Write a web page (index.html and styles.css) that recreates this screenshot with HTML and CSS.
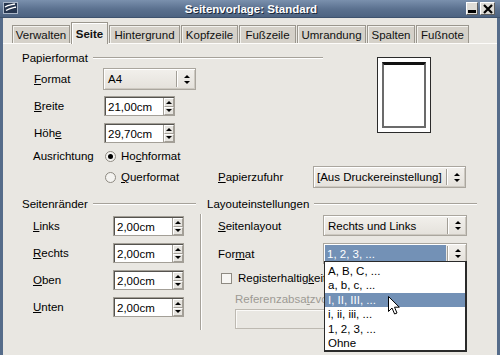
FILE: index.html
```html
<!DOCTYPE html>
<html lang="de">
<head>
<meta charset="utf-8">
<title>Seitenvorlage: Standard</title>
<link rel="stylesheet" href="styles.css">
</head>
<body>
<div class="titlebar">
  <svg class="appicon" width="15" height="12" viewBox="0 0 15 12">
    <rect x="0.5" y="0.5" width="14" height="11" fill="#26364f" stroke="#a9b6c8"/>
    <path d="M2 5 C5 3 8 3 12 2" stroke="#fff" stroke-width="1.4" fill="none"/>
    <path d="M3 8.5 C6 6.5 9 6 13 5" stroke="#fff" stroke-width="1.4" fill="none"/>
  </svg>
  <div class="title">Seitenvorlage: Standard</div>
  <div class="wbtns">
    <span class="wbtn wmin"><span class="minbar"></span></span>
    <span class="wbtn wclose">
      <svg width="10" height="10" viewBox="0 0 10 10"><path d="M1 1 L9 9 M9 1 L1 9" stroke="#000" stroke-width="2.2"/></svg>
    </span>
  </div>
</div>
<div class="client">
  <div class="tabs">
    <div class="tab t-verwalten">Verwalten</div>
    <div class="tab sel t-seite">Seite</div>
    <div class="tab t-hinter">Hintergrund</div>
    <div class="tab t-kopf">Kopfzeile</div>
    <div class="tab t-fuss">Fußzeile</div>
    <div class="tab t-umr">Umrandung</div>
    <div class="tab t-spalten">Spalten</div>
    <div class="tab t-note">Fußnote</div>
  </div>
  <div class="panel">
    <div class="paper">
      <div class="paper-main">
        <div class="ghead"><span>Papierformat</span></div>
        <div class="prows">
          <div class="frow r-format"><span class="lbl lbl-p"><u>F</u>ormat</span>
            <div class="combo c-a4"><span class="ctext">A4</span><span class="csep"></span><span class="carr"><i class="up"></i><i class="dn"></i></span></div>
          </div>
          <div class="frow r-breite"><span class="lbl lbl-p"><u>B</u>reite</span>
            <div class="spin sp-p"><span class="val">21,00cm</span><span class="arrows"><span class="ab"><i class="up"></i></span><span class="ab"><i class="dn"></i></span></span></div>
          </div>
          <div class="frow r-hoehe"><span class="lbl lbl-p">Höh<u>e</u></span>
            <div class="spin sp-p"><span class="val">29,70cm</span><span class="arrows"><span class="ab"><i class="up"></i></span><span class="ab"><i class="dn"></i></span></span></div>
          </div>
        </div>
      </div>
      <div class="preview"><div class="sheet"></div></div>
    </div>
    <div class="orow o1">
      <span class="lbl lbl-o">Ausrichtung</span>
      <span class="radio on"></span><span class="rtext">Ho<u>c</u>hformat</span>
    </div>
    <div class="orow o2">
      <span class="lbl lbl-o"></span>
      <span class="rgroup"><span class="radio"></span><span class="rtext"><u>Q</u>uerformat</span></span>
      <span class="lbl lbl-pz"><u>P</u>apierzufuhr</span>
      <div class="combo c-pz"><span class="ctext">[Aus Druckereinstellung]</span><span class="csep"></span><span class="carr"><i class="up"></i><i class="dn"></i></span></div>
    </div>
    <div class="lower">
      <div class="margins">
        <div class="ghead"><span>Seitenränder</span></div>
        <div class="mrows">
          <div class="frow m1"><span class="lbl lbl-m"><u>L</u>inks</span>
            <div class="spin"><span class="val">2,00cm</span><span class="arrows"><span class="ab"><i class="up"></i></span><span class="ab"><i class="dn"></i></span></span></div>
          </div>
          <div class="frow mn"><span class="lbl lbl-m"><u>R</u>echts</span>
            <div class="spin"><span class="val">2,00cm</span><span class="arrows"><span class="ab"><i class="up"></i></span><span class="ab"><i class="dn"></i></span></span></div>
          </div>
          <div class="frow mn"><span class="lbl lbl-m"><u>O</u>ben</span>
            <div class="spin"><span class="val">2,00cm</span><span class="arrows"><span class="ab"><i class="up"></i></span><span class="ab"><i class="dn"></i></span></span></div>
          </div>
          <div class="frow mn"><span class="lbl lbl-m"><u>U</u>nten</span>
            <div class="spin"><span class="val">2,00cm</span><span class="arrows"><span class="ab"><i class="up"></i></span><span class="ab"><i class="dn"></i></span></span></div>
          </div>
        </div>
      </div>
      <div class="vsep"></div>
      <div class="layout">
        <div class="ghead"><span>Layouteinstellungen</span></div>
        <div class="lrows">
          <div class="frow l1"><span class="lbl lbl-l"><u>S</u>eitenlayout</span>
            <div class="combo c-l"><span class="ctext">Rechts und Links</span><span class="csep"></span><span class="carr"><i class="up"></i><i class="dn"></i></span></div>
          </div>
          <div class="frow l2"><span class="lbl lbl-l">For<u>m</u>at</span>
            <div class="combo c-l sel"><span class="ctext">1, 2, 3, ...</span><span class="csep"></span><span class="carr"><i class="up"></i><i class="dn"></i></span></div>
          </div>
          <div class="frow l3"><span class="check"></span><span class="ctl">Registerhaltig<u>k</u>eit</span></div>
          <div class="l4">Referenzabsa<u>t</u>zvorlage</div>
          <div class="l5 dbtn"></div>
        </div>
      </div>
    </div>
  </div>
  <div class="popup">
    <div class="item">A, B, C, ...</div>
    <div class="item">a, b, c, ...</div>
    <div class="item hl">I, II, III, ...</div>
    <div class="item">i, ii, iii, ...</div>
    <div class="item">1, 2, 3, ...</div>
    <div class="item">Ohne</div>
  </div>
  <svg class="cursor" width="13" height="20" viewBox="0 0 13 20">
    <path d="M0.5 0.5 L0.5 15.5 L4 12 L6.6 18 L9 17 L6.5 11.2 L11.3 11.2 Z" fill="#fff" stroke="#000" stroke-width="1" stroke-linejoin="miter"/>
  </svg>
</div>
</body>
</html>
```

FILE: styles.css
```css
* { box-sizing: border-box; }
html, body { margin: 0; padding: 0; }
body {
  width: 500px;
  height: 355px;
  overflow: hidden;
  background: #e9e7e2;
  font-family: "Liberation Sans", Arial, sans-serif;
  font-size: 11.5px;
  color: #000;
}
u { text-decoration: underline; text-underline-offset: 1px; }

/* title bar */
.titlebar {
  height: 18px;
  display: flex;
  align-items: center;
  padding: 0 5px 0 3px;
  background: linear-gradient(#7a90ad, #5a708e 55%, #4d6381);
  border-bottom: 1px solid #3e526d;
}
.appicon { display: block; margin-top: -1px; }
.title {
  flex: 1;
  text-align: center;
  color: #fff;
  font-weight: bold;
  font-size: 11.5px;
  text-shadow: 1px 1px 0 #1d2a3c;
  padding-left: 18px;
}
.wbtns { display: flex; gap: 2px; }
.wbtn {
  height: 13px;
  background: #dedcd7;
  border: 1px solid;
  border-color: #fff #5e5e5e #5e5e5e #fff;
  display: flex;
  align-items: center;
  justify-content: center;
}
.wmin { width: 12px; align-items: flex-end; padding-bottom: 1px; }
.minbar { width: 8px; height: 3px; background: #000; }
.wclose { width: 15px; }

/* client */
.client {
  position: relative;
  height: 337px;
  border-left: 3px solid #566c8a;
  border-right: 3px solid #566c8a;
  background: #e9e7e2;
}
.tabs {
  display: flex;
  align-items: flex-end;
  height: 25px;
  padding-left: 9px;
}
.tab {
  height: 18px;
  margin-right: 1px;
  background: #d5d1c9;
  border: 1px solid #9a968d;
  border-bottom: none;
  box-shadow: inset 1px 1px 0 #f3f2ee;
  display: flex;
  align-items: center;
  justify-content: center;
  padding-top: 1px;
  color: #111;
}
.tab.sel {
  height: 21px;
  background: #e9e7e2;
  font-weight: bold;
  box-shadow: inset 1px 1px 0 #fff;
  position: relative;
  margin-bottom: -1px;
  height: 22px;
}
.t-verwalten { width: 58px; }
.t-seite { width: 37px; }
.t-hinter { width: 71px; }
.t-kopf { width: 57px; }
.t-fuss { width: 57px; }
.t-umr { width: 69px; }
.t-spalten { width: 48px; }
.t-note { width: 53px; }

.panel {
  border-top: 1px solid #fdfcfa;
  padding: 7px 0 0 19px;
}

/* group headings */
.ghead {
  display: flex;
  align-items: center;
  height: 14px;
  line-height: 14px;
}
.ghead::after {
  content: "";
  flex: 1;
  margin-left: 5px;
  border-top: 1px solid #a6a29a;
  border-bottom: 1px solid #fff;
}

.frow { display: flex; align-items: center; }
.lbl { display: inline-block; }

/* paper */
.paper { display: flex; }
.paper-main { width: 301px; }
.prows { padding-left: 12px; }
.lbl-p { width: 69px; }
.r-format { margin-top: 3px; height: 22px; }
.r-breite { margin-top: 6px; height: 20px; }
.r-hoehe { margin-top: 7px; height: 20px; }
.sp-p { margin-left: 1px; }

.preview {
  margin: 6px 0 0 54px;
  width: 54px;
  height: 76px;
  border: 1px solid #2b2b2b;
  background: #fff;
  padding: 4px;
}
.sheet {
  width: 100%;
  height: 100%;
  border: 2px solid #6b6b6b;
  border-top: 3px solid #111;
  background: #fff;
}

/* orientation */
.orow { display: flex; align-items: center; padding-left: 11px; }
.o1 { margin-top: 5px; height: 16px; }
.o2 { margin-top: 2px; height: 22px; }
.lbl-o { width: 72px; }
.rgroup { display: flex; align-items: center; width: 113px; }
.radio {
  width: 11px;
  height: 11px;
  border-radius: 50%;
  border: 1px solid #8e8a82;
  background: #f4f3f0;
  display: inline-flex;
  align-items: center;
  justify-content: center;
  flex: none;
}
.radio.on::after {
  content: "";
  width: 5px;
  height: 5px;
  border-radius: 50%;
  background: #000;
}
.rtext { margin-left: 5px; }
.lbl-pz { width: 95px; }

/* combo */
.combo {
  display: flex;
  align-items: center;
  height: 22px;
  border: 1px solid #aaa69e;
  background: linear-gradient(#f2f0ec, #e4e1db);
  box-shadow: inset 1px 1px 0 #fff, inset -1px -1px 0 #cdc9c1;
}
.ctext { flex: 1; padding-left: 4px; white-space: nowrap; }
.csep {
  width: 2px;
  height: 16px;
  border-left: 1px solid #a29e96;
  border-right: 1px solid #fff;
}
.carr {
  width: 17px;
  display: flex;
  flex-direction: column;
  align-items: center;
  gap: 3px;
}
.c-a4 { width: 93px; }
.c-pz { width: 153px; }
.c-pz .ctext { padding-left: 3px; }
.c-l { width: 144px; height: 21px; }
.combo.sel .ctext {
  align-self: stretch;
  margin: 1px 1px 1px 1px;
  background: #7391b6;
  color: #fff;
  display: flex;
  align-items: center;
  padding-left: 2px;
}

i.up, i.dn { display: block; width: 0; height: 0; border-left: 3px solid transparent; border-right: 3px solid transparent; }
i.up { border-bottom: 3px solid #000; }
i.dn { border-top: 3px solid #000; }

/* spin */
.spin {
  display: flex;
  width: 71px;
  height: 20px;
  border: 1px solid #a39f97;
  box-shadow: inset 1px 1px 0 #55534e;
  background: #fff;
}
.val { flex: 1; padding: 1px 0 0 3px; display: flex; align-items: center; }
.arrows {
  width: 11px;
  display: flex;
  flex-direction: column;
  border-left: 1px solid #a39f97;
  margin: 1px 0 0 0;
}
.ab {
  flex: 1;
  display: flex;
  align-items: center;
  justify-content: center;
  background: #e6e4df;
  border: 1px solid;
  border-color: #fff #a39f97 #a39f97 #fff;
}

/* lower part */
.lower { display: flex; margin-top: 9px; }
.margins { width: 174px; }
.mrows { padding-left: 11px; }
.lbl-m { width: 80px; }
.m1 { margin-top: 5px; height: 20px; }
.mn { margin-top: 7px; height: 20px; }
.vsep {
  margin: 17px 0 0 4px;
  width: 2px;
  height: 116px;
  border-left: 1px solid #a6a29a;
  border-right: 1px solid #fff;
}
.layout { margin-left: 5px; width: 270px; }
.lrows { padding-left: 11px; }
.lbl-l { width: 105px; }
.l1 { margin-top: 4px; height: 21px; }
.l2 { margin-top: 7px; height: 21px; }
.l3 { margin-top: 6px; height: 16px; }
.check {
  width: 11px;
  height: 11px;
  margin-left: 3px;
  border: 1px solid #8e8a82;
  background: #f7f6f3;
  flex: none;
}
.ctl { margin-left: 6px; white-space: nowrap; }
.l4 {
  margin: 6px 0 0 17px;
  height: 14px;
  line-height: 14px;
  color: #9d9a94;
}
.l5 {
  margin: 3px 0 0 17px;
  width: 230px;
  height: 20px;
  border: 1px solid #bdb9b1;
  background: #e9e7e2;
  box-shadow: inset 1px 1px 0 #fbfaf8;
}

/* popup */
.popup {
  position: absolute;
  left: 321px;
  top: 243px;
  width: 143px;
  height: 91px;
  background: #fff;
  border: 1px solid #2a2a2a;
  border-right: 2px solid #2a2a2a;
  border-bottom: 2px solid #2a2a2a;
  padding-top: 2px;
}
.item {
  height: 14.4px;
  line-height: 14.4px;
  padding-left: 3px;
  white-space: nowrap;
}
.item.hl { background: #7391b6; color: #fff; }

.cursor { position: absolute; left: 385px; top: 278px; }
```
